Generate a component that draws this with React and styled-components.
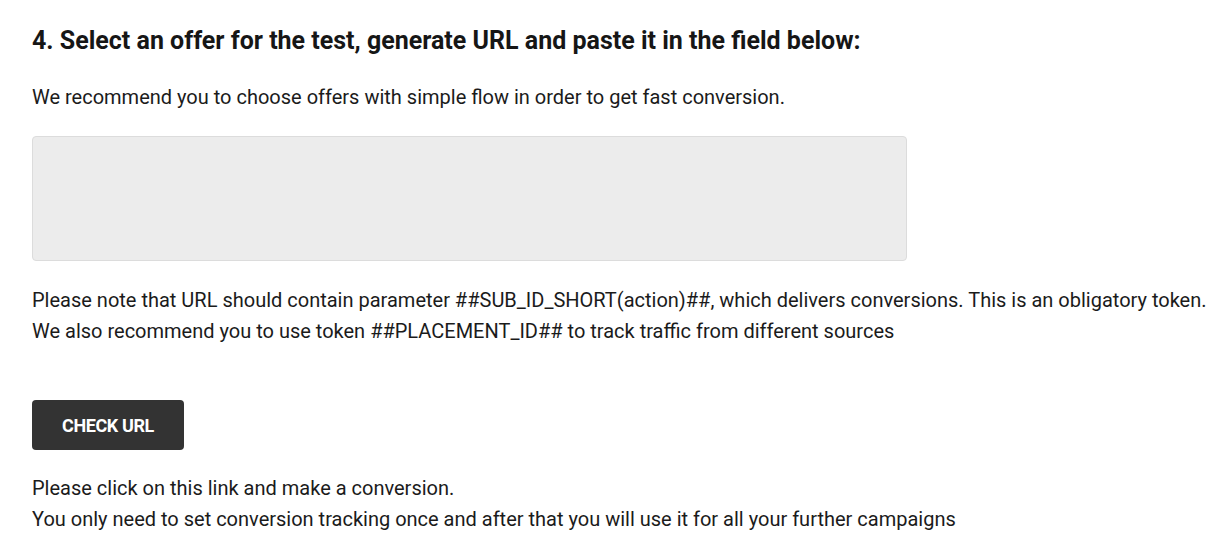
import React from "react";
import styled, { createGlobalStyle } from "styled-components";

const Global = createGlobalStyle`
  body {
    margin: 0;
    background: #fff;
    font-family: Roboto, "Liberation Sans", sans-serif;
    color: #1b1b1b;
  }
`;

const Page = styled.div`
  padding: 26px 4px 0 32px;
`;

const Title = styled.h2`
  margin: 0;
  font-size: 25px;
  font-weight: 700;
  line-height: 30px;
  color: #161616;
`;

const Text = styled.p`
  margin: ${(props) => props.margin || "0"};
  font-size: 20px;
  line-height: 31px;
  white-space: nowrap;
`;

const UrlField = styled.textarea`
  display: block;
  box-sizing: border-box;
  width: 875px;
  height: 125px;
  margin: 23px 0 24px;
  background: #ececec;
  border: 1px solid #dcdcdc;
  border-radius: 4px;
  resize: none;
  outline: none;
  font-family: inherit;
  font-size: 16px;
`;

const Button = styled.button`
  display: block;
  margin: 53px 0 23px;
  width: 152px;
  height: 50px;
  background: #333;
  color: #fff;
  border: none;
  border-radius: 4px;
  font-family: Roboto, "Liberation Sans", sans-serif;
  font-weight: 700;
  font-size: 18px;
  letter-spacing: -0.4px;
  text-transform: uppercase;
  cursor: pointer;
`;

export default function App() {
  return (
    <>
      <Global />
      <Page>
        <Title>4. Select an offer for the test, generate URL and paste it in the field below:</Title>
        <Text margin="26px 0 0">
          We recommend you to choose offers with simple flow in order to get fast conversion.
        </Text>
        <UrlField />
        <Text>
          Please note that URL should contain parameter ##SUB_ID_SHORT(action)##, which delivers conversions. This is an obligatory token.
          <br />
          We also recommend you to use token ##PLACEMENT_ID## to track traffic from different sources
        </Text>
        <Button>Check URL</Button>
        <Text>
          Please click on this link and make a conversion.
          <br />
          You only need to set conversion tracking once and after that you will use it for all your further campaigns
        </Text>
      </Page>
    </>
  );
}
